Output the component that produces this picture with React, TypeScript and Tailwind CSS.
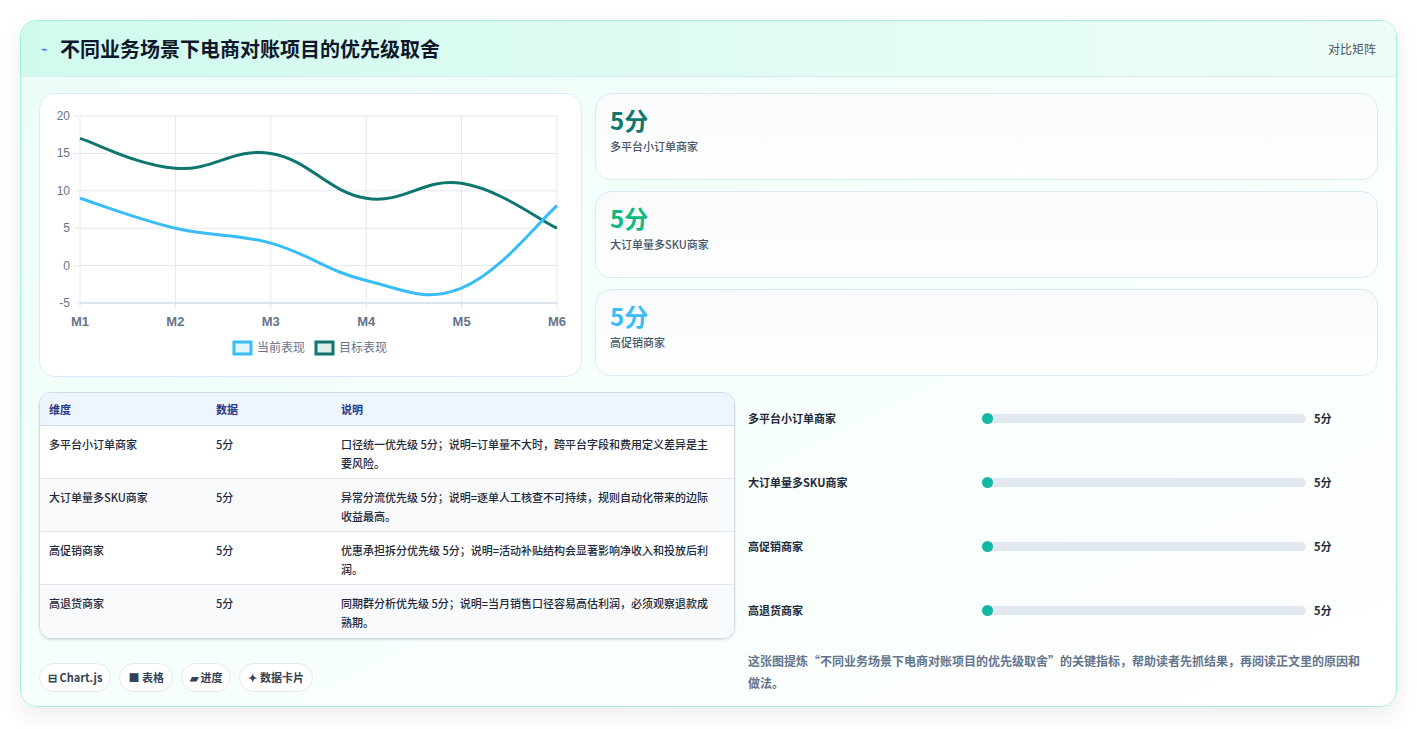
import React from 'react';

const font = { fontFamily: '"Noto Sans CJK SC", "Noto Sans", sans-serif' };

const rows = [
  { name: '多平台小订单商家', value: '5分', note: '口径统一优先级 5分；说明=订单量不大时，跨平台字段和费用定义差异是主要风险。' },
  { name: '大订单量多SKU商家', value: '5分', note: '异常分流优先级 5分；说明=逐单人工核查不可持续，规则自动化带来的边际收益最高。' },
  { name: '高促销商家', value: '5分', note: '优惠承担拆分优先级 5分；说明=活动补贴结构会显著影响净收入和投放后利润。' },
  { name: '高退货商家', value: '5分', note: '同期群分析优先级 5分；说明=当月销售口径容易高估利润，必须观察退款成熟期。' },
];

const stats = [
  { label: '多平台小订单商家', color: 'text-[#0f766e]' },
  { label: '大订单量多SKU商家', color: 'text-[#10b981]' },
  { label: '高促销商家', color: 'text-[#38bdf8]' },
];

// chart geometry (inside card coords)
const X0 = 40, X1 = 517, Y0 = 22, Y1 = 209;
const xs = [0, 1, 2, 3, 4, 5].map((i) => X0 + ((X1 - X0) / 5) * i);
const yv = (v: number) => Y0 + ((20 - v) / 25) * (Y1 - Y0);

function smooth(vals: number[]) {
  const p = vals.map((v, i) => [xs[i], yv(v)]);
  const t = 0.4;
  let d = `M${p[0][0]},${p[0][1]}`;
  for (let i = 0; i < p.length - 1; i++) {
    const p0 = p[i - 1] || p[i];
    const p1 = p[i];
    const p2 = p[i + 1];
    const p3 = p[i + 2] || p2;
    const c1 = [p1[0] + ((p2[0] - p0[0]) * t) / 2, p1[1] + ((p2[1] - p0[1]) * t) / 2];
    const c2 = [p2[0] - ((p3[0] - p1[0]) * t) / 2, p2[1] - ((p3[1] - p1[1]) * t) / 2];
    d += ` C${c1[0]},${c1[1]} ${c2[0]},${c2[1]} ${p2[0]},${p2[1]}`;
  }
  return d;
}

function Chart() {
  return (
    <svg width="541" height="283" className="block">
      {[20, 15, 10, 5, 0, -5].map((v) => (
        <g key={v}>
          <line x1={X0 - 6} x2={X1} y1={yv(v)} y2={yv(v)} stroke="#e2e8f0" />
          <text x={X0 - 10} y={yv(v) + 4} textAnchor="end" fontSize="12" fill="#64748b" fontFamily="Liberation Sans, sans-serif">{v}</text>
        </g>
      ))}
      {xs.map((x, i) => (
        <g key={i}>
          <line x1={x} x2={x} y1={Y0} y2={Y1 + 6} stroke="#e2e8f0" />
          <text x={x} y={Y1 + 23} textAnchor="middle" fontSize="13" fontWeight="bold" fill="#64748b" fontFamily="Liberation Sans, sans-serif">M{i + 1}</text>
        </g>
      ))}
      <line x1={X0} x2={X1} y1={Y1} y2={Y1} stroke="#cbd5e1" />
      <path d={smooth([17, 13, 15, 9, 11, 5])} fill="none" stroke="#0f766e" strokeWidth="3" />
      <path d={smooth([9, 5, 3, -2, -3, 8])} fill="none" stroke="#38bdf8" strokeWidth="3" />
      <rect x="194" y="248" width="17" height="12" fill="#e0f5fe" stroke="#38bdf8" strokeWidth="3" />
      <text x="217" y="258" fontSize="12" fill="#64748b">当前表现</text>
      <rect x="276" y="248" width="17" height="12" fill="#dcefe9" stroke="#0f766e" strokeWidth="3" />
      <text x="299" y="258" fontSize="12" fill="#64748b">目标表现</text>
    </svg>
  );
}

export default function App() {
  return (
    <div className="min-h-screen bg-white p-5" style={font}>
      <div className="w-[1377px] rounded-2xl border border-[#a7f3d0] bg-gradient-to-br from-[#ecfdf8] via-[#f6fffc] to-white shadow-[0_8px_24px_rgba(0,0,0,0.08)] overflow-hidden">
        <div className="flex h-[56px] items-center justify-between border-b border-[#d5ecf3] bg-gradient-to-r from-[#d1faef] to-[#ecfdf6] px-5">
          <div className="flex items-center gap-3">
            <span className="text-[11px] text-[#2563eb]">⌁</span>
            <h1 className="text-[20px] font-bold text-[#0f172a]">不同业务场景下电商对账项目的优先级取舍</h1>
          </div>
          <span className="text-[12px] text-[#475569]">对比矩阵</span>
        </div>
        <div className="px-[18px] pt-4 pb-[12px]">
          <div className="flex gap-[13px]">
            <div className="h-[284px] w-[543px] rounded-2xl border border-[#dbeafe] bg-white">
              <Chart />
            </div>
            <div className="flex flex-1 flex-col gap-[11px]">
              {stats.map((s) => (
                <div key={s.label} className="h-[87px] rounded-2xl border border-[#d9ecf3] bg-gradient-to-b from-[#f8fafc] to-white px-[14px] pt-[10px]">
                  <div className={`text-[24px] font-bold leading-[32px] ${s.color}`}>5分</div>
                  <div className="mt-[2px] text-[11px] font-medium text-[#475569]">{s.label}</div>
                </div>
              ))}
            </div>
          </div>
          <div className="mt-[15px] flex gap-[13px]">
            <div className="w-[696px]">
              <div className="overflow-hidden rounded-xl border border-[#cfdbe8] shadow-sm">
                <div className="grid h-[33px] grid-cols-[167px_125px_1fr] items-center border-b border-[#cfdbe8] bg-[#eef5ff] px-[9px] text-[11px] font-bold text-[#1e3a8a]">
                  <span>维度</span><span>数据</span><span>说明</span>
                </div>
                {rows.map((r, i) => (
                  <div key={r.name} className={`grid h-[53px] grid-cols-[167px_125px_1fr] border-[#e2e8f0] px-[9px] pt-[9px] text-[11px] font-medium leading-[19px] text-[#1e293b] ${i < 3 ? 'border-b' : ''} ${i % 2 ? 'bg-[#f8fafc]' : 'bg-white'}`}>
                    <span>{r.name}</span><span>{r.value}</span><span className="pr-[10px]">{r.note}</span>
                  </div>
                ))}
              </div>
              <div className="mt-6 flex gap-2 text-[11px] font-bold text-[#334155]">
                {['⊟ Chart.js', '■ 表格', '▰ 进度', '✦ 数据卡片'].map((p) => (
                  <span key={p} className="rounded-full border border-[#e2e8f0] bg-white px-2 py-[5px]">{p}</span>
                ))}
              </div>
            </div>
            <div className="flex flex-1 flex-col">
              <div className="flex flex-col gap-[45px] pt-[17px]">
                {rows.map((r) => (
                  <div key={r.name} className="flex h-[19px] items-center text-[11px] font-bold text-[#1e293b]">
                    <span className="w-[234px]">{r.name}</span>
                    <div className="relative h-[9px] w-[324px] rounded-full bg-[#e2e8f0]">
                      <div className="absolute left-0 top-[-1px] h-[11px] w-[11px] rounded-full bg-[#14b8a6]" />
                    </div>
                    <span className="ml-[8px]">5分</span>
                  </div>
                ))}
              </div>
              <p className="mt-[30px] pr-2 text-[12px] font-bold leading-[22px] text-[#64748b]">
                这张图提炼“不同业务场景下电商对账项目的优先级取舍”的关键指标，帮助读者先抓结果，再阅读正文里的原因和做法。
              </p>
            </div>
          </div>
        </div>
      </div>
    </div>
  );
}
